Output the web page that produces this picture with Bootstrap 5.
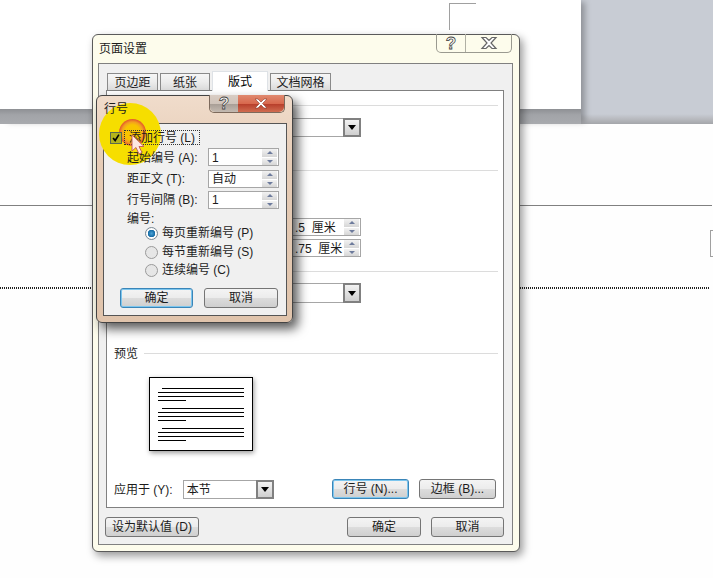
<!DOCTYPE html>
<html lang="zh">
<head>
    <meta charset="UTF-8">
    <meta name="viewport" content="width=device-width, initial-scale=1.0">
    <title>页面设置</title>
    <link href="https://cdn.jsdelivr.net/npm/bootstrap@5.3.0/dist/css/bootstrap.min.css" rel="stylesheet">
    <style>
        html, body { margin: 0; background: #fff; }
        body { font: 12px/14px "Liberation Sans", "Noto Sans CJK SC", sans-serif; color: #1c1c1c; }
        .screen { position: relative; width: 713px; height: 578px; overflow: hidden; background: #fefefe; }

        /* word document behind the dialogs */
        .workspace { height: 124px; background: linear-gradient(#c8ccd4 0, #c8ccd4 114px, #b8babf 119px, #a4a6aa 124px); }
        .sheet-col { width: 581px; box-shadow: 6px 0 6px -2px rgba(0, 0, 0, .28); }
        .sheet { height: 109px; background: #fff; }
        .sheet-foot { height: 15px; background: linear-gradient(#8e9094, #a2a4a8 40%, #a8aaae); }
        .rule { height: 1px; margin-top: 81px; width: 712px; background: #808080; }
        .dots { width: 710px; height: 2px; margin-top: 81px; background: repeating-linear-gradient(90deg, #222 0 1px, transparent 1px 2px); }
        .crop { position: absolute; border: 0 solid #a0a0a0; }
        .crop-top { left: 449px; top: 3px; width: 27px; height: 27px; border-width: 1px 0 0 1px; }
        .crop-right { left: 710px; top: 230px; width: 10px; height: 27px; border-width: 1px 0 1px 1px; }

        /* windows */
        .win { position: absolute; border: 1px solid #5a5a5a; border-radius: 6px; }
        .win-main { left: 92px; top: 34px; width: 428px; height: 518px; background: #fdfcec; box-shadow: 3px 4px 9px rgba(0, 0, 0, .4); }
        .win-small { z-index: 1; left: 96px; top: 95px; width: 197px; height: 228px; background: linear-gradient(#f0dccb, #e6ccb6 30%, #e0c4ac); box-shadow: 5px 6px 11px rgba(0, 0, 0, .65); border-color: #444; }
        .titlebar-main { height: 28px; padding: 7px 0 0 6px; }
        .titlebar-small { height: 27px; padding: 6px 0 0 7px; }
        .caption { display: flex; height: 19px; margin: -8px 7px 0 auto; border: 1px solid #9a9a90; border-top: 0; border-radius: 0 0 5px 5px; }
        .titlebar-small .caption { height: 18px; margin: -7px 7px 0 auto; border-color: #7d6a5c; }
        .cap-btn { display: flex; align-items: center; justify-content: center; font: bold 17px/1 "Liberation Sans", sans-serif; color: #fff; -webkit-text-stroke: .8px #444; }
        .cap-help { width: 29px; border-right: 1px solid #b0b0a4; }
        .cap-close { width: 45px; }
        .titlebar-small .cap-help { width: 28px; background: linear-gradient(#d9cdc4, #cfc3ba 50%, #a99f97 55%, #c4bab1); border: 0; border-radius: 0 0 0 5px; }
        .titlebar-small .cap-close { width: 46px; background: linear-gradient(#e08a70, #d8694e 50%, #b8402c 55%, #d06c50); border-radius: 0 0 5px 0; }

        .panel-main { width: 415px; height: 482px; margin-left: 5px; padding: 7px 0 0 7px; background: #f0f0f0; border: 1px solid #808080; }
        .panel-small { width: 184px; height: 193px; margin-left: 6px; background: #f0f0f0; border: 1px solid #555; }

        /* tabs */
        .tabs { height: 19px; margin-left: 1px; gap: 2px; align-items: flex-end; border: 0; flex-wrap: nowrap; }
        .tabs .nav-link { height: 17px; padding: 1px 0 0; font-size: 12px; line-height: 16px; text-align: center; color: #1c1c1c; background: linear-gradient(#f6f6f6, #ececec 50%, #dadada); border: 1px solid #8a8a8a; border-bottom: 0; border-radius: 0; margin: 0; }
        .tabs .nav-link.active { height: 20px; margin-bottom: -1px; background: #fff; line-height: 19px; position: relative; z-index: 1; }
        .tab-a { width: 51px; } .tab-b { width: 50px; } .tab-c { width: 56px; } .tab-d { width: 61px; }
        .pane { width: 398px; height: 418px; padding: 0 5px 0 7px; background: #fff; border: 1px solid #808080; }

        .sec { display: flex; align-items: center; height: 16px; }
        .sec::after { content: ""; flex: 1; height: 1px; background: #dcdcdc; }
        .sec-a { margin-top: 6px; } .sec-b { margin-top: 25px; } .sec-c { margin-top: 6px; } .sec-d { margin-top: 42px; }
        .sec-d span { margin-right: 6px; padding-top: 1px; }
        .line-row { width: 247px; justify-content: flex-end; }

        /* controls */
        .tx { padding-top: 2px; white-space: nowrap; }
        .combo { display: flex; align-items: center; background: #fff; border: 1px solid #a6a6a6; padding-left: 3px; }
        .combo-top { width: 120px; height: 19px; margin-top: 5px; }
        .combo-mid { width: 120px; height: 20px; margin-top: 4px; }
        .combo-apply { width: 91px; height: 19px; margin-left: 10px; }
        .drop { width: 18px; height: calc(100% + 2px); margin: -1px -1px -1px auto; display: flex; align-items: center; justify-content: center; background: linear-gradient(#f2f2f2, #cfcfcf); border: 2px solid #808080; }
        .drop::after { content: ""; border: 4px solid transparent; border-top: 5px solid #000; border-bottom: 0; }
        .spin { display: flex; align-items: center; height: 18px; background: #fff; border: 1px solid #a6a6a6; padding-left: 3px; }
        .spin-btns { width: 15px; height: 16px; margin-left: auto; margin-right: 1px; display: flex; flex-direction: column; gap: 1px; }
        .spin-btns i { flex: 1; display: flex; align-items: center; justify-content: center; background: linear-gradient(#f2f2f2, #d6d6d6); }
        .spin-btns i::after { content: ""; border: 3px solid transparent; }
        .spin-btns i:first-child::after { border-bottom: 3px solid #6d7b9c; border-top: 0; }
        .spin-btns i:last-child::after { border-top: 3px solid #6d7b9c; border-bottom: 0; }
        .spin-wide { width: 120px; padding-left: 53px; }
        .spin-a { margin-top: 40px; } .spin-b { margin-top: 3px; }
        .win-button { width: 74px; height: 20px; padding: 1px 0 0; font-size: 12px; line-height: 17px; color: #1c1c1c; background: linear-gradient(#f4f4f4, #ececec 48%, #dcdcdc 52%, #cfcfcf); border: 1px solid #757575; border-radius: 3px; white-space: nowrap; }
        .win-button.is-default { border-color: #3a85b8; box-shadow: inset 0 0 0 1px #7cc6ee; }

        /* preview */
        .preview { width: 104px; height: 74px; margin: 16px 0 0 35px; padding: 10px 8px 0; background: #fff; border: 1px solid #000; box-shadow: 1px 2px 5px rgba(0, 0, 0, .4); }
        .para { display: flex; flex-direction: column; gap: 3px; margin-bottom: 7px; }
        .para span { height: 1px; background: #000; }
        .para span:first-child { margin-left: 4px; }
        .para span:last-child { width: 28px; }
        .apply-row { height: 20px; margin-top: 28px; }
        .apply-row .win-button { width: 77px; }
        .apply-btns { gap: 10px; margin-left: auto; margin-right: 2px; }
        .foot-row { margin-top: 9px; width: 398px; }
        .foot-default { width: 94px; margin-left: -1px; }
        .foot-ok { width: 74px; }
        .foot-cancel { width: 73px; margin-left: 10px; }

        /* line number dialog: content sits above the presenter spot */
        .titlebar-small > *, .panel-small > * { position: relative; z-index: 1; }
        .check-row { height: 15px; margin: 6px 0 0 6px; gap: 1px; }
        .check-row .form-check-input { width: 12px; height: 12px; margin: 0; border: 1px solid #5c6a50; border-radius: 0; background-color: #b4b41c; background-image: url("data:image/svg+xml,%3Csvg xmlns='http://www.w3.org/2000/svg' viewBox='0 0 12 12'%3E%3Cpath d='M2.500 6l2.500 3 4.500-7' fill='none' stroke='%23000' stroke-width='2'/%3E%3C/svg%3E"); }
        .focus-label { height: 15px; padding: 0 4px; border: 1px dotted #333; margin-left: 1px; white-space: nowrap; }
        .num-row { height: 18px; padding-left: 23px; }
        .num-row .lbl { width: 81px; }
        .num-row .spin { width: 71px; }
        .nr-a { margin-top: 3px; } .nr-b { margin-top: 4px; } .nr-c { margin-top: 3px; }
        .num-head { height: 12px; margin: 3px 0 0 23px; }
        .radio-row { height: 18px; padding-left: 41px; gap: 4px; }
        .radio-row + .radio-row { margin-top: 1px; }
        .radio-row + .radio-row + .radio-row { margin-top: 0; }
        .radio-row .form-check-input { width: 13px; height: 13px; margin: 0; border: 1px solid #9a9a9a; background-color: #e6e6e6; background-image: none; }
        .radio-row .form-check-input:checked { background-image: radial-gradient(circle, #4aa2d6 0, #146aa4 3.5px, #fff 4px, #e8e8e8 100%); border-color: #7a8a96; }
        .small-btns { margin: 9px 0 0 16px; gap: 11px; }
        .small-btns .win-button:first-child { width: 73px; }

        /* presenter cursor highlight */
        .spot { position: absolute; left: 2px; top: 7px; width: 62px; height: 62px; border-radius: 50%; background: #f6de00; }
        .ring { position: absolute; left: 22px; top: 23px; width: 27px; height: 27px; border-radius: 50%; background: radial-gradient(circle, #f8c400 0 40%, #f3a020 55%, #e4572c 70%, #ee8a30 82%, rgba(246, 200, 0, .5) 100%); }
        .pointer { position: absolute; z-index: 2; left: 131px; top: 134px; }
    </style>
</head>
<body>
    <div class="screen">
        <div class="workspace">
            <div class="sheet-col">
                <div class="sheet"></div>
                <div class="sheet-foot"></div>
            </div>
        </div>
        <div class="rule"></div>
        <div class="dots"></div>
        <div class="crop crop-top"></div>
        <div class="crop crop-right"></div>

        <!-- 页面设置 -->
        <div class="win win-main">
            <div class="titlebar-main d-flex">
                <span>页面设置</span>
                <div class="caption">
                    <span class="cap-btn cap-help">?</span>
                    <span class="cap-btn cap-close">
                        <svg width="18" height="14" viewBox="0 0 18 14"><path d="M2 1.500h4l3 3 3-3h4l-5 5.500 5 5.500h-4l-3-3-3 3h-4l5-5.500z" fill="#fff" stroke="#666" stroke-width="1.200"/></svg>
                    </span>
                </div>
            </div>
            <div class="panel-main">
                <ul class="nav nav-tabs tabs">
                    <li class="nav-item"><a class="nav-link tab-a" href="#">页边距</a></li>
                    <li class="nav-item"><a class="nav-link tab-b" href="#">纸张</a></li>
                    <li class="nav-item"><a class="nav-link tab-c active" href="#">版式</a></li>
                    <li class="nav-item"><a class="nav-link tab-d" href="#">文档网格</a></li>
                </ul>
                <div class="pane">
                    <div class="sec sec-a"></div>
                    <div class="d-flex line-row">
                        <div class="combo combo-top"><span class="drop"></span></div>
                    </div>
                    <div class="sec sec-b"></div>
                    <div class="d-flex line-row spin-a">
                        <div class="spin spin-wide"><span class="tx">.5&nbsp;&nbsp;厘米</span><span class="spin-btns"><i></i><i></i></span></div>
                    </div>
                    <div class="d-flex line-row spin-b">
                        <div class="spin spin-wide"><span class="tx">.75&nbsp;&nbsp;厘米</span><span class="spin-btns"><i></i><i></i></span></div>
                    </div>
                    <div class="sec sec-c"></div>
                    <div class="d-flex line-row">
                        <div class="combo combo-mid"><span class="drop"></span></div>
                    </div>
                    <div class="sec sec-d"><span>预览</span></div>
                    <div class="preview">
                        <div class="para"><span></span><span></span><span></span><span></span></div>
                        <div class="para"><span></span><span></span><span></span><span></span></div>
                        <div class="para"><span></span><span></span><span></span><span></span></div>
                    </div>
                    <div class="d-flex align-items-center apply-row">
                        <span class="tx">应用于 (Y):</span>
                        <div class="combo combo-apply"><span class="tx">本节</span><span class="drop"></span></div>
                        <div class="d-flex apply-btns">
                            <button type="button" class="btn win-button is-default">行号 (N)...</button>
                            <button type="button" class="btn win-button">边框 (B)...</button>
                        </div>
                    </div>
                </div>
                <div class="d-flex foot-row">
                    <button type="button" class="btn win-button foot-default">设为默认值 (D)</button>
                    <button type="button" class="btn win-button ms-auto foot-ok">确定</button>
                    <button type="button" class="btn win-button foot-cancel">取消</button>
                </div>
            </div>
        </div>

        <!-- 行号 -->
        <div class="win win-small">
            <div class="titlebar-small d-flex">
                <span>行号</span>
                <div class="caption">
                    <span class="cap-btn cap-help">?</span>
                    <span class="cap-btn cap-close">
                        <svg width="16" height="11" viewBox="0 0 16 11"><path d="M2 1h3l3 3 3-3h3l-4.500 4.500 4.500 4.500h-3l-3-3-3 3h-3l4.500-4.500z" fill="#fff" stroke="#8a3a2a" stroke-width=".6"/></svg>
                    </span>
                </div>
            </div>
            <div class="panel-small">
                <div class="d-flex align-items-center check-row">
                    <input class="form-check-input" type="checkbox" checked>
                    <span class="focus-label">添加行号 (L)</span>
                </div>
                <div class="d-flex align-items-center num-row nr-a">
                    <span class="lbl tx">起始编号 (A):</span>
                    <div class="spin"><span class="tx">1</span><span class="spin-btns"><i></i><i></i></span></div>
                </div>
                <div class="d-flex align-items-center num-row nr-b">
                    <span class="lbl">距正文 (T):</span>
                    <div class="spin"><span>自动</span><span class="spin-btns"><i></i><i></i></span></div>
                </div>
                <div class="d-flex align-items-center num-row nr-c">
                    <span class="lbl">行号间隔 (B):</span>
                    <div class="spin"><span>1</span><span class="spin-btns"><i></i><i></i></span></div>
                </div>
                <div class="num-head">编号:</div>
                <div class="d-flex align-items-center radio-row">
                    <input class="form-check-input" type="radio" name="restart" checked>
                    <span>每页重新编号 (P)</span>
                </div>
                <div class="d-flex align-items-center radio-row">
                    <input class="form-check-input" type="radio" name="restart">
                    <span>每节重新编号 (S)</span>
                </div>
                <div class="d-flex align-items-center radio-row">
                    <input class="form-check-input" type="radio" name="restart">
                    <span>连续编号 (C)</span>
                </div>
                <div class="d-flex small-btns">
                    <button type="button" class="btn win-button is-default">确定</button>
                    <button type="button" class="btn win-button">取消</button>
                </div>
            </div>
            <div class="spot"></div>
            <div class="ring"></div>
        </div>

        <svg class="pointer" width="16" height="22" viewBox="0 0 16 22"><path d="M1 1v16l4-3.500 3 6.500 3-1.500-3-6h5z" fill="#fde6e2" stroke="#c9635a"/></svg>
    </div>

    <script src="https://cdn.jsdelivr.net/npm/bootstrap@5.3.0/dist/js/bootstrap.bundle.min.js"></script>
</body>
</html>
